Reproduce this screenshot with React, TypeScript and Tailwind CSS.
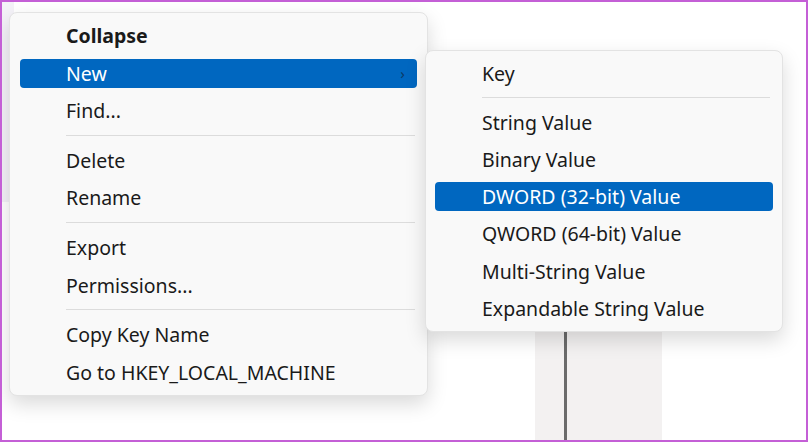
export default function App() {
  const f = { fontFamily: '"Noto Sans", "Open Sans", sans-serif' };
  const Item = ({ t, bold, hl, arrow }: { t: string; bold?: boolean; hl?: boolean; arrow?: boolean }) => (
    <div className={`h-[30px] my-[4px] mx-[10px] rounded-[4px] flex items-center pl-[46px] pr-3 text-[19.5px] ${hl ? 'bg-[#0067c0] text-white' : 'text-[#1a1a1a]'} ${bold ? 'font-bold' : ''}`}>
      <span className="flex-1">{t}</span>
      {arrow && <span className="text-[#0b3a66] text-[15px]">›</span>}
    </div>
  );
  const Sep = ({ l }: { l: number }) => (
    <div className="h-[12px] flex items-center">
      <div className="h-px bg-[#dcdcdc] flex-1 mr-[12px]" style={{ marginLeft: l }} />
    </div>
  );
  const SItem = ({ t, hl }: { t: string; hl?: boolean }) => (
    <div className={`h-[30px] my-[4px] mx-[9px] rounded-[4px] flex items-center pl-[47px] text-[19.5px] ${hl ? 'bg-[#0067c0] text-white' : 'text-[#1a1a1a]'}`}>{t}</div>
  );
  return (
    <div className="w-[808px] h-[442px] relative bg-white border-[2px] border-[#c45fd6] overflow-hidden" style={f}>
      <div className="absolute left-0 top-0 w-[12px] h-[200px] bg-[#f4f2f8]" />
      <div className="absolute left-[533px] top-[320px] w-[127px] h-[122px] bg-[#f3f1f1]" />
      <div className="absolute left-[562px] top-[320px] w-[3px] h-[122px] bg-[#6b6b6b]" />
      <div className="absolute left-[7px] top-[10px] w-[419px] h-[384px] bg-[#f9f9f9] border border-[#e3e3e3] rounded-[8px] shadow-[0_8px_20px_rgba(0,0,0,0.15)] py-[4px] flex flex-col">
        <Item t="Collapse" bold />
        <Item t="New" hl arrow />
        <Item t="Find..." />
        <Sep l={56} />
        <Item t="Delete" />
        <Item t="Rename" />
        <Sep l={56} />
        <Item t="Export" />
        <Item t="Permissions..." />
        <Sep l={56} />
        <Item t="Copy Key Name" />
        <Item t="Go to HKEY_LOCAL_MACHINE" />
      </div>
      <div className="absolute left-[423px] top-[48px] w-[358px] h-[282px] bg-[#f9f9f9] border border-[#e3e3e3] rounded-[8px] shadow-[0_8px_20px_rgba(0,0,0,0.15)] py-[4px] flex flex-col">
        <SItem t="Key" />
        <Sep l={56} />
        <SItem t="String Value" />
        <SItem t="Binary Value" />
        <SItem t="DWORD (32-bit) Value" hl />
        <SItem t="QWORD (64-bit) Value" />
        <SItem t="Multi-String Value" />
        <SItem t="Expandable String Value" />
      </div>
    </div>
  );
}
